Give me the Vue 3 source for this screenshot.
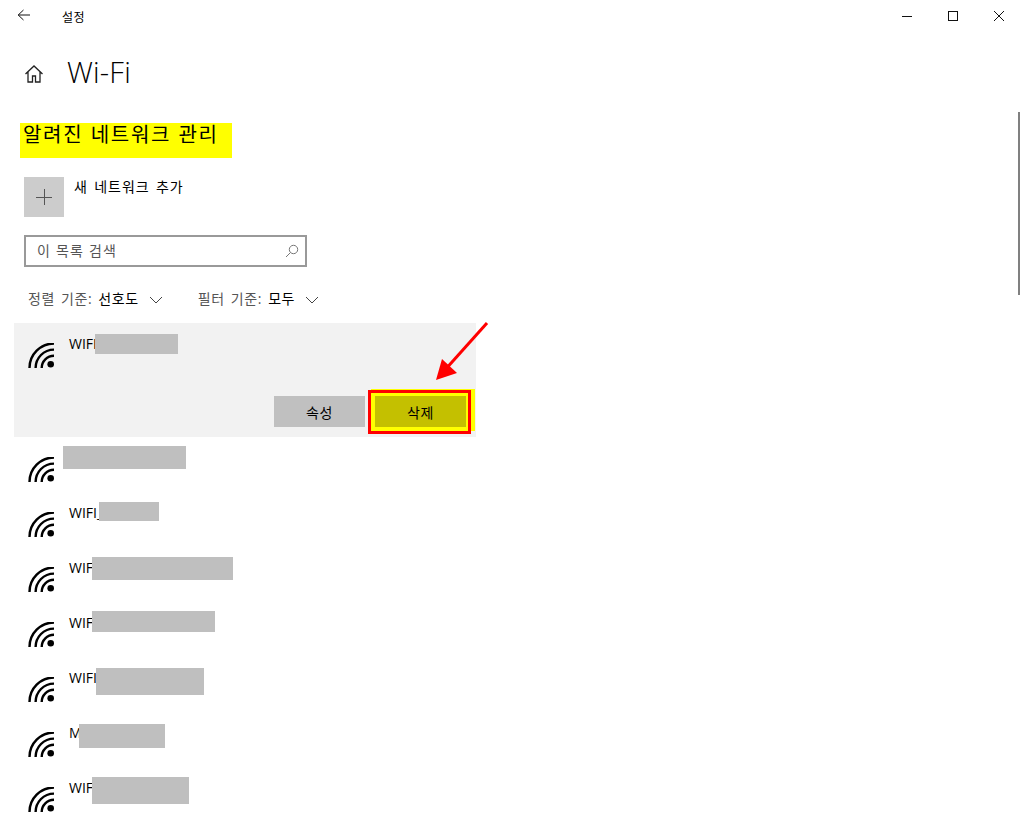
<script setup>
const networks = [
  { id: 2, name: '', box: { left: 49, top: 9, width: 123, height: 23 } },
  { id: 3, name: 'WIFI_', box: { left: 85, top: 10, width: 60, height: 19 } },
  { id: 4, name: 'WIFI', box: { left: 78, top: 10, width: 141, height: 23 } },
  { id: 5, name: 'WIFI', box: { left: 78, top: 9, width: 123, height: 21 } },
  { id: 6, name: 'WIFI', box: { left: 82, top: 11, width: 108, height: 27 } },
  { id: 7, name: 'MI', box: { left: 65, top: 12, width: 86, height: 24 } },
  { id: 8, name: 'WIFI', box: { left: 78, top: 10, width: 97, height: 27 } }
]
const boxStyle = (b) => ({ left: b.left + 'px', top: b.top + 'px', width: b.width + 'px', height: b.height + 'px' })
</script>

<template>
  <div class="window">
    <header class="titlebar">
      <div class="title-left">
        <svg class="back" viewBox="0 0 13 12" width="13" height="12"><path d="M6.500 1 1.200 6l5.300 5M1.200 6H13" fill="none" stroke="#111" stroke-width="1" /></svg>
        <span class="app-name">설정</span>
      </div>
      <div class="controls">
        <svg viewBox="0 0 46 32" width="46" height="32"><path d="M18 16.500h10" stroke="#111" stroke-width="1" /></svg>
        <svg viewBox="0 0 46 32" width="46" height="32"><rect x="18.500" y="11.500" width="9" height="9" fill="none" stroke="#111" stroke-width="1" /></svg>
        <svg viewBox="0 0 46 32" width="46" height="32"><path d="M18 11l10 10M28 11 18 21" stroke="#111" stroke-width="1" /></svg>
      </div>
    </header>

    <main class="content">
      <div class="page-head">
        <svg class="home" viewBox="0 0 20 20" width="20" height="20"><path d="M1.500 10 10 2l8.500 8M4 8v10h4.500v-6h3v6H16V8" fill="none" stroke="#222" stroke-width="1.300" /></svg>
        <h1>Wi-Fi</h1>
      </div>

      <h2 class="section">알려진 네트워크 관리</h2>

      <div class="add">
        <div class="add-tile">
          <svg viewBox="0 0 16 16" width="16" height="16"><path d="M8.500 0v16M0 8.500h16" stroke="#555" stroke-width="1" /></svg>
        </div>
        <span class="add-label">새 네트워크 추가</span>
      </div>

      <div class="search">
        <span class="placeholder">이 목록 검색</span>
        <svg viewBox="0 0 14 14" width="14" height="14"><circle cx="8.500" cy="5.500" r="4.200" fill="none" stroke="#777" stroke-width="1" /><path d="M5.500 8.500 1 13" stroke="#777" stroke-width="1" /></svg>
      </div>

      <div class="filters">
        <span class="filter"><span class="muted">정렬 기준:</span> 선호도
          <svg viewBox="0 0 14 8" width="14" height="8"><path d="M1 1l6 6 6-6" fill="none" stroke="#444" stroke-width="1" /></svg>
        </span>
        <span class="filter"><span class="muted">필터 기준:</span> 모두
          <svg viewBox="0 0 14 8" width="14" height="8"><path d="M1 1l6 6 6-6" fill="none" stroke="#444" stroke-width="1" /></svg>
        </span>
      </div>

      <section class="selected">
        <div class="net-row">
          <svg class="wifi" viewBox="0 0 26 25" width="26" height="25">
            <g fill="none" stroke="#000" stroke-width="2.400"><circle cx="26" cy="25" r="24.500" /><circle cx="26" cy="25" r="18.400" /><circle cx="26" cy="25" r="12.300" /></g>
            <circle cx="22.700" cy="21.300" r="3.300" fill="#000" />
          </svg>
          <span class="net-name">WIFI</span>
          <i class="redact first"></i>
        </div>
        <div class="actions">
          <button class="btn">속성</button>
          <div class="mark">
            <button class="btn olive">삭제</button>
          </div>
        </div>
        <svg class="arrow" viewBox="0 0 60 64" width="60" height="64"><path d="M54 2 11 50" stroke="#f00" stroke-width="3" /><path d="M3 59 9 38 24 52Z" fill="#f00" /></svg>
      </section>

      <ul class="list">
        <li v-for="n in networks" :key="n.id" class="net-row plain">
          <svg class="wifi" viewBox="0 0 26 25" width="26" height="25">
            <g fill="none" stroke="#000" stroke-width="2.400"><circle cx="26" cy="25" r="24.500" /><circle cx="26" cy="25" r="18.400" /><circle cx="26" cy="25" r="12.300" /></g>
            <circle cx="22.700" cy="21.300" r="3.300" fill="#000" />
          </svg>
          <span class="net-name">{{ n.name }}</span>
          <i class="redact" :style="boxStyle(n.box)"></i>
        </li>
      </ul>
    </main>

    <div class="scrollbar"></div>
  </div>
</template>

<style scoped>
.window {
  position: relative;
  width: 1022px;
  height: 827px;
  overflow: hidden;
  background: #fff;
  color: #000;
  font-family: "Open Sans", "Noto Sans CJK KR", sans-serif;
}
.titlebar {
  display: flex;
  justify-content: space-between;
  height: 32px;
}
.title-left {
  display: flex;
  align-items: center;
  padding-left: 17px;
}
.back { margin-top: -3px; }
.app-name {
  margin-left: 32px;
  font-size: 12px;
  margin-top: 2px;
  letter-spacing: .5px;
}
.controls {
  display: flex;
  padding-right: 0;
}
.content {
  padding-left: 14px;
  width: 462px;
}
.page-head {
  display: flex;
  align-items: center;
  height: 42px;
  margin-top: 20px;
  padding-left: 10px;
}
.home { margin-top: 2px; }
h1 {
  margin: -2px 0 0 23px;
  font-size: 29px;
  font-weight: 300;
  line-height: 42px;
  letter-spacing: .2px;
}
.section {
  margin: 29px 0 0 6px;
  width: 212px;
  height: 35px;
  background: #ff0;
  font-size: 20px;
  font-weight: 400;
  line-height: 24px;
  padding-left: 3px;
  box-sizing: border-box;
  word-spacing: .5px;
  letter-spacing: 1.700px;
  white-space: nowrap;
}
.add {
  display: flex;
  margin: 19px 0 0 10px;
}
.add-tile {
  display: flex;
  align-items: center;
  justify-content: center;
  width: 40px;
  height: 40px;
  background: #ccc;
}
.add-label {
  margin-left: 10px;
  font-size: 14px;
  line-height: 20px;
  letter-spacing: .9px;
  word-spacing: 2px;
}
.search {
  display: flex;
  align-items: center;
  justify-content: space-between;
  box-sizing: border-box;
  width: 283px;
  height: 32px;
  margin: 18px 0 0 10px;
  padding: 0 6px 0 11px;
  border: 2px solid #999;
}
.placeholder {
  font-size: 14px;
  color: #555;
  letter-spacing: 1.200px;
  margin-top: -2px;
}
.filters {
  display: flex;
  gap: 35px;
  margin: 22px 0 0 14px;
  font-size: 14px;
  line-height: 20px;
  height: 34px;
  letter-spacing: .55px;
  word-spacing: 2px;
}
.filter { white-space: nowrap; }
.filter svg { margin-left: 4px; }
.muted { color: #555; }
.selected {
  position: relative;
  isolation: isolate;
  box-sizing: border-box;
  width: 462px;
  height: 114px;
  background: #f2f2f2;
}
.net-row {
  position: relative;
  display: flex;
  align-items: flex-start;
  height: 55px;
  padding: 20px 0 0 14px;
  box-sizing: border-box;
}
.wifi { flex: none; display: block; }
.net-name {
  margin-left: 15px;
  margin-top: -9px;
  font-size: 14px;
  line-height: 20px;
}
.redact {
  position: absolute;
  display: block;
  background: #bfbfbf;
}
.redact.first {
  left: 81px;
  top: 11px;
  width: 83px;
  height: 20px;
}
.actions {
  display: flex;
  justify-content: flex-end;
  align-items: flex-start;
  margin-top: 10px;
  padding-right: 5px;
}
.btn {
  display: block;
  width: 91px;
  height: 31px;
  padding: 0;
  border: 0;
  background: #c0c0c0;
  color: #000;
  font: 14px "Open Sans", "Noto Sans CJK KR", sans-serif;
  letter-spacing: .5px;
  margin-top: 8px;
}
.mark {
  position: relative;
  box-sizing: border-box;
  width: 103px;
  height: 44px;
  margin: 2px 0 0 3px;
  padding: 3px 0 0 4px;
  border: 3px solid #f00;
  background: #ff0;
}
.mark::before {
  content: "";
  position: absolute;
  left: 0;
  top: -4px;
  width: 104px;
  height: 42px;
  background: #ff0;
  z-index: -1;
}
.btn.olive {
  background: #c4c000;
  margin-top: 0;
}
.arrow {
  position: absolute;
  left: 419px;
  top: -2px;
}
.list {
  list-style: none;
  margin: 0;
  padding: 0;
}
.scrollbar {
  position: absolute;
  left: 1018px;
  top: 112px;
  width: 2px;
  height: 183px;
  background: #808080;
}
</style>
